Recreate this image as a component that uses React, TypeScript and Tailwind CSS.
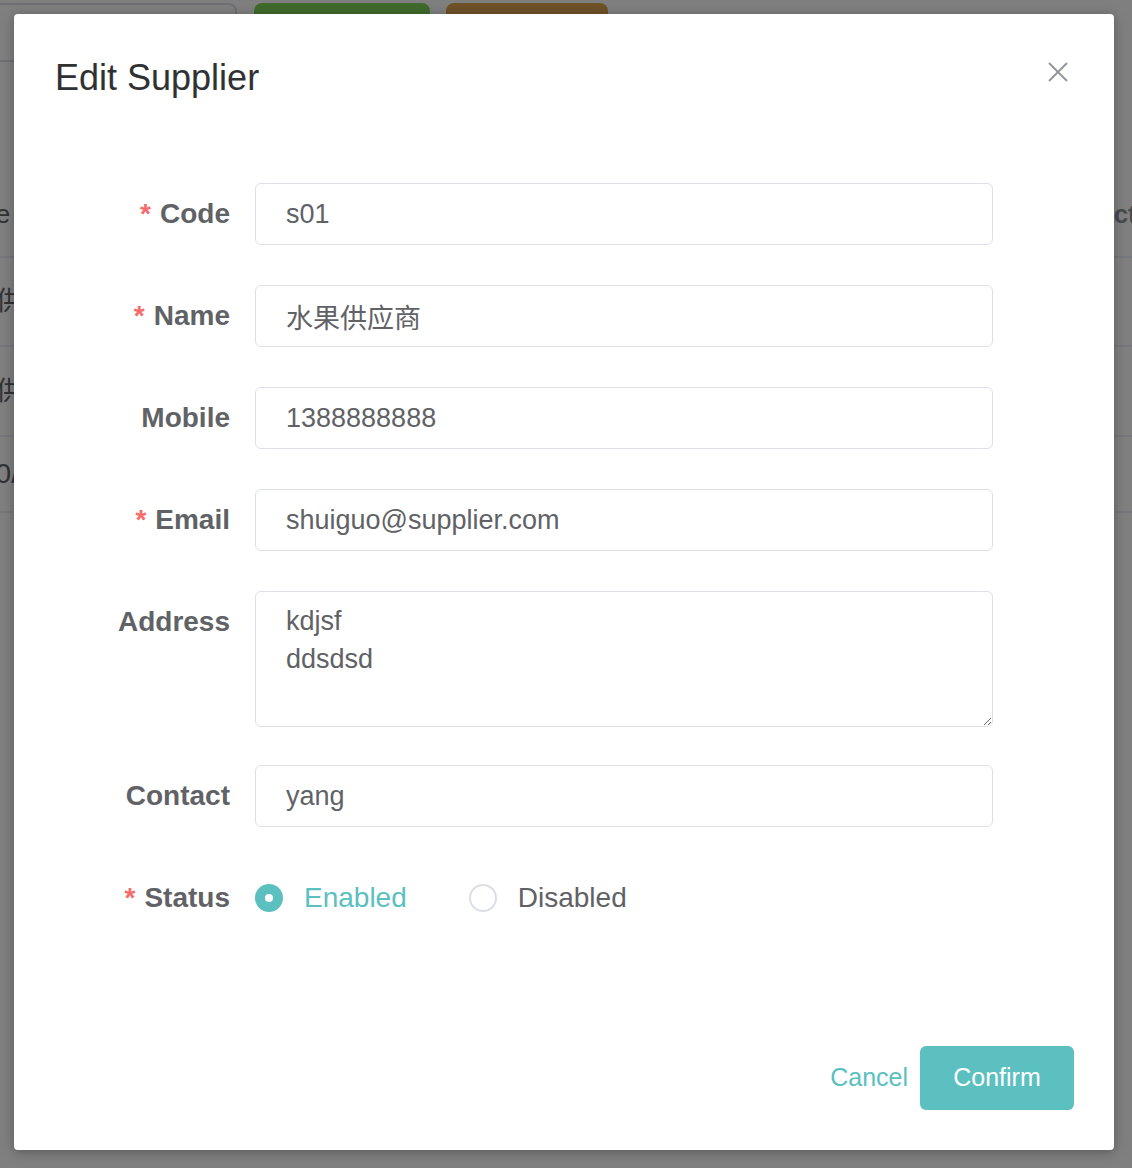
import React, { useState } from 'react';

const TEAL = '#5bc0bf';

const FormRow = ({
  label,
  required,
  children,
  className = 'mb-[40px]'
}: {
  label: string;
  required?: boolean;
  children: React.ReactNode;
  className?: string;
}) => (
  <div className={`flex items-start ${className}`}>
    <label className="w-[241px] shrink-0 pr-[25px] text-right text-[28px] font-bold leading-[62px] text-[#606266]">
      {required && <span className="mr-[9px] text-[#f56c6c]">*</span>}
      {label}
    </label>
    <div className="w-[738px]">{children}</div>
  </div>
);

const TextInput = ({ value }: { value: string }) => {
  const [val, setVal] = useState(value);
  return (
    <input
      type="text"
      value={val}
      onChange={(e) => setVal(e.target.value)}
      className="block h-[62px] w-full rounded-[6px] border border-[#dcdfe6] bg-white px-[30px] text-[27px] text-[#606266] outline-none"
      style={{ fontFamily: '"Liberation Sans", "Noto Sans CJK SC", sans-serif' }}
    />
  );
};

const Radio = ({ checked, label, onClick }: { checked: boolean; label: string; onClick: () => void }) => (
  <button type="button" onClick={onClick} className="flex items-center gap-[21px]">
    {checked ? (
      <span className="flex h-[28px] w-[28px] items-center justify-center rounded-full bg-[#5bc0bf]">
        <span className="h-[8px] w-[8px] rounded-full bg-white" />
      </span>
    ) : (
      <span className="h-[28px] w-[28px] rounded-full border-2 border-[#dcdfe6] bg-white" />
    )}
    <span className={`text-[28px] ${checked ? 'text-[#5bc0bf]' : 'text-[#606266]'}`}>{label}</span>
  </button>
);

export default function App() {
  const [status, setStatus] = useState('enabled');

  return (
    <div
      className="relative h-[1168px] w-full overflow-hidden bg-white"
      style={{ fontFamily: '"Liberation Sans", "Noto Sans CJK SC", sans-serif' }}
    >
      {/* Page behind the dialog */}
      <div className="flex pt-[3px]">
        <div className="ml-[-20px] h-[59px] w-[257px] rounded-[8px] border-2 border-[#dcdfe6] bg-white" />
        <div className="ml-[17px] h-[59px] w-[176px] rounded-[8px] bg-[#7ed456]" />
        <div className="ml-[16px] h-[59px] w-[162px] rounded-[8px] bg-[#dea250]" />
      </div>
      <div className="mt-[110px] text-[26px] text-[#606266]">
        <div className="grid h-[86px] grid-cols-[1040px_1fr] items-center border-b-2 border-[#ebeef5]">
          <span className="ml-[-52px]">Code</span>
          <span className="whitespace-nowrap font-bold text-[#909399]">Contact</span>
        </div>
        <div className="flex h-[89px] items-center border-b-2 border-[#ebeef5]">
          <span className="ml-[-30px] whitespace-nowrap">果供应商</span>
        </div>
        <div className="flex h-[90px] items-center border-b-2 border-[#ebeef5]">
          <span className="ml-[-30px] whitespace-nowrap">果供应商</span>
        </div>
        <div className="flex h-[76px] items-center border-b-2 border-[#ebeef5]">
          <span className="ml-[-20px] whitespace-nowrap text-[28px]">20/10</span>
        </div>
      </div>

      {/* Overlay */}
      <div className="absolute inset-0 bg-black/50" />

      {/* Dialog */}
      <div className="absolute left-[14px] top-[14px] flex h-[1136px] w-[1100px] flex-col rounded-[4px] bg-white shadow-[0_2px_12px_rgba(0,0,0,0.3)]">
        <div className="flex items-start justify-between pl-[41px] pr-[46px] pt-[46px]">
          <h2 className="text-[36px] leading-[36px] text-[#303133]">Edit Supplier</h2>
          <button type="button" className="mt-[2px] text-[#909399]">
            <svg width="20" height="20" viewBox="0 0 20 20" fill="none" stroke="currentColor" strokeWidth="1.8">
              <path d="M1 1 L19 19 M19 1 L1 19" />
            </svg>
          </button>
        </div>

        <form className="mt-[87px]" onSubmit={(e) => e.preventDefault()}>
          <FormRow label="Code" required>
            <TextInput value="s01" />
          </FormRow>
          <FormRow label="Name" required>
            <TextInput value="水果供应商" />
          </FormRow>
          <FormRow label="Mobile">
            <TextInput value="1388888888" />
          </FormRow>
          <FormRow label="Email" required>
            <TextInput value="shuiguo@supplier.com" />
          </FormRow>
          <FormRow label="Address" className="mb-[38px]">
            <textarea
              defaultValue={'kdjsf\nddsdsd'}
              className="block h-[136px] w-full rounded-[6px] border border-[#dcdfe6] bg-white px-[30px] pt-[10px] text-[27px] leading-[38px] text-[#606266] outline-none"
              style={{ fontFamily: '"Liberation Sans", sans-serif' }}
            />
          </FormRow>
          <FormRow label="Contact">
            <TextInput value="yang" />
          </FormRow>
          <FormRow label="Status" required className="">
            <div className="flex h-[62px] items-center gap-[62px] pl-0">
              <Radio checked={status === 'enabled'} label="Enabled" onClick={() => setStatus('enabled')} />
              <Radio checked={status === 'disabled'} label="Disabled" onClick={() => setStatus('disabled')} />
            </div>
          </FormRow>
        </form>

        <div className="mt-auto flex items-center justify-end gap-[12px] pb-[40px] pr-[40px]">
          <button type="button" className="text-[25px]" style={{ color: TEAL }}>
            Cancel
          </button>
          <button
            type="button"
            className="h-[64px] w-[154px] rounded-[6px] text-[25px] text-white"
            style={{ backgroundColor: TEAL }}
          >
            Confirm
          </button>
        </div>
      </div>
    </div>
  );
}
